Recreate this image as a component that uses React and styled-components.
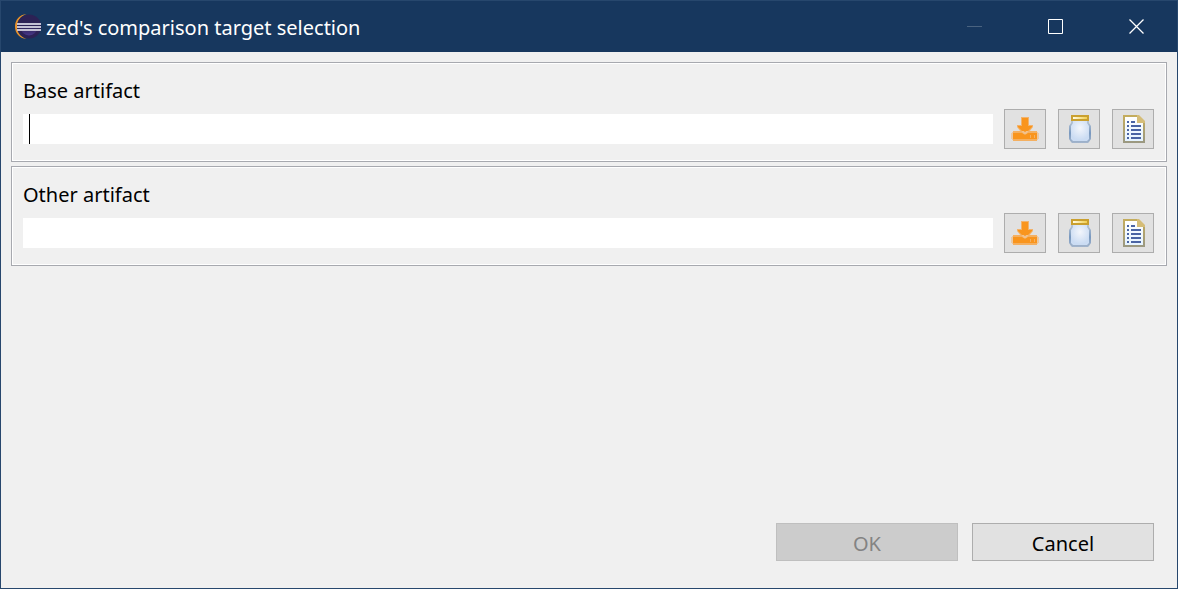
import React, { useId } from "react";
import styled, { createGlobalStyle } from "styled-components";

const GlobalStyle = createGlobalStyle`
  *, *::before, *::after { box-sizing: border-box; }
  body { margin: 0; background: #f0f0f0; }
  body, button, input { font-family: "Noto Sans", "Open Sans", sans-serif; font-size: 20px; }
`;

const Dialog = styled.div`
  min-height: 100vh;
  display: flex;
  flex-direction: column;
  background: #f0f0f0;
  border: 1px solid #27476d;
  color: #000;
`;

const TitleBar = styled.header`
  display: flex;
  align-items: center;
  height: 51px;
  padding-left: 13px;
  background: #17375e;
  color: #fff;
`;

const Title = styled.h1`
  flex: 1;
  margin: 0 0 0 4px;
  padding-top: 2px;
  font-size: 20px;
  font-weight: 400;
  line-height: 28px;
  white-space: nowrap;
`;

const WindowButton = styled.button`
  display: flex;
  align-items: center;
  justify-content: center;
  width: 81px;
  height: 51px;
  padding: 0;
  border: 0;
  background: transparent;
  color: ${(p) => (p.disabled ? "#4a6380" : "#fff")};
`;

const Content = styled.main`
  display: flex;
  flex: 1;
  flex-direction: column;
  gap: 4px;
  padding: 10px;
`;

const Group = styled.section`
  height: 100px;
  padding: 12px 12px 11px 11px;
  border: 1px solid #a7a9af;
  box-shadow: inset 0 0 0 1px #fff;
`;

const GroupLabel = styled.label`
  display: block;
  line-height: 32px;
  height: 34px;
`;

const FieldRow = styled.div`
  display: flex;
  align-items: center;
  gap: 12px;
`;

const TextField = styled.div`
  position: relative;
  flex: 1;
  display: flex;
  margin-right: -1px;

  &::after {
    content: "";
    display: ${(p) => (p.$caret ? "block" : "none")};
    position: absolute;
    left: 6px;
    top: 0;
    width: 1px;
    height: 100%;
    background: #000;
  }
`;

const TextInput = styled.input`
  flex: 1;
  min-width: 0;
  height: 30px;
  padding: 0 6px;
  border: 0;
  outline: 0;
  background: #fff;
`;

const IconButton = styled.button`
  display: flex;
  align-items: center;
  justify-content: center;
  width: 42px;
  height: 40px;
  padding: 0;
  border: 1px solid #adadad;
  background: #e1e1e1;
`;

const Footer = styled.footer`
  display: flex;
  justify-content: flex-end;
  gap: 14px;
  padding: 0 23px 27px;
`;

const ActionButton = styled.button`
  width: 182px;
  height: 38px;
  padding: 4px 0 0;
  border: 1px solid ${(p) => (p.disabled ? "#bfbfbf" : "#adadad")};
  background: ${(p) => (p.disabled ? "#cccccc" : "#e1e1e1")};
  color: ${(p) => (p.disabled ? "#838383" : "#000")};
  line-height: 28px;
`;

function EclipseLogo() {
  return (
    <svg width="28" height="26" viewBox="0 0 28 26" aria-hidden="true">
      <defs>
        <linearGradient id="planet" x1="0" y1="0" x2="0" y2="1">
          <stop offset="0" stopColor="#2c2255" />
          <stop offset="0.5" stopColor="#2c2255" />
          <stop offset="1" stopColor="#473788" />
        </linearGradient>
      </defs>
      <path d="M12.500 0C5.500 0.500 1 6 1 12.500s4.500 12 11.500 12.500C6 22.500 3 18 3 12.500S6 2.500 12.500 0Z" fill="#e8912b" />
      <circle cx="15.200" cy="12.500" r="12" fill="#2c2255" />
      <circle cx="15" cy="13" r="8.500" fill="url(#planet)" />
      <path d="M3 9h24v2H3zM3 12h24v2H3zM3 15h24v2H3z" fill="#c3c1d4" />
    </svg>
  );
}

function DownloadIcon() {
  return (
    <svg width="28" height="28" viewBox="0 0 28 28" aria-hidden="true">
      <path d="M0 18h1v-1h26v1h1v6h-1v1H1v-1H0z" fill="#ecc9a3" />
      <path d="M2 16h24v10H2z" fill="#f4b061" />
      <path d="M2 18h9l3 2 3-2h9v6H2z" fill="#f9951d" />
      <path d="M10 2h8v8h4v2l-4 5h-8l-4-5v-2h4z" fill="#f2b36c" />
      <path d="M11 3h6v8h4v1l-4 4h-2l-1 1-1-1h-2l-4-4v-1h4z" fill="#f9951d" />
      <path d="M11 16h2v1h2v-1h2v1l-2 2h-2l-2-2z" fill="#f1c18c" />
      <path d="M19 20h1v3h-1zM23 20h1v3h-1z" fill="#f5b062" />
    </svg>
  );
}

function JarIcon() {
  return (
    <svg width="28" height="28" viewBox="0 0 28 28" aria-hidden="true">
      <defs>
        <radialGradient id="glass" cx="0.5" cy="0.35" r="0.6">
          <stop offset="0" stopColor="#f3f6fc" />
          <stop offset="1" stopColor="#cbdcf3" />
        </radialGradient>
        <linearGradient id="rim" x1="0" y1="0" x2="0" y2="1">
          <stop offset="0" stopColor="#b9c6d4" />
          <stop offset="0.55" stopColor="#7898bf" />
          <stop offset="1" stopColor="#a4b5cc" />
        </linearGradient>
        <linearGradient id="lid-shine" x1="0" y1="0" x2="1" y2="0">
          <stop offset="0" stopColor="#fffce6" />
          <stop offset="1" stopColor="#f3cf4f" />
        </linearGradient>
      </defs>
      <path d="M6 6h18v2l2 3v13l-2 3-1 1H7l-1-1-2-3V11l2-3z" fill="url(#rim)" />
      <path d="M8 6h14v2l2 3v13l-2 2H8l-2-2V11l2-3z" fill="url(#glass)" />
      <path d="M6 0h18v6H6z" fill="#caa02f" />
      <path d="M8 2h14v2H8z" fill="url(#lid-shine)" />
    </svg>
  );
}

function DocumentIcon() {
  return (
    <svg width="28" height="28" viewBox="0 0 28 28" aria-hidden="true">
      <defs>
        <linearGradient id="page-edge" x1="0" y1="0" x2="0" y2="1">
          <stop offset="0" stopColor="#c5ad5c" />
          <stop offset="1" stopColor="#9a9882" />
        </linearGradient>
        <linearGradient id="paper" x1="0" y1="0" x2="0" y2="1">
          <stop offset="0" stopColor="#fff" />
          <stop offset="1" stopColor="#e5f3ff" />
        </linearGradient>
      </defs>
      <path d="M4 0h14v2h2v2h2v2h2v2h2v20H4z" fill="url(#page-edge)" />
      <path d="M6 2h12v6h6v18H6z" fill="url(#paper)" />
      <path d="M18 0h2l6 6v2h-8z" fill="#d5bd78" />
      <path d="M8 6h2v2H8zM12 6h4v2h-4zM8 10h2v2H8zM12 10h10v2H12zM8 14h2v2H8zM12 14h10v2H12zM8 18h2v2H8zM12 18h10v2H12zM8 22h2v2H8zM12 22h10v2H12z" fill="#4a64a3" />
    </svg>
  );
}

function ArtifactGroup({ label, caret }) {
  const id = useId();
  return (
    <Group>
      <GroupLabel htmlFor={id}>{label}</GroupLabel>
      <FieldRow>
        <TextField $caret={caret}>
          <TextInput id={id} type="text" />
        </TextField>
        <IconButton type="button" aria-label="Download"><DownloadIcon /></IconButton>
        <IconButton type="button" aria-label="Choose archive"><JarIcon /></IconButton>
        <IconButton type="button" aria-label="Choose file"><DocumentIcon /></IconButton>
      </FieldRow>
    </Group>
  );
}

export default function App() {
  return (
    <>
      <GlobalStyle />
      <Dialog>
        <TitleBar>
          <EclipseLogo />
          <Title>zed's comparison target selection</Title>
          <WindowButton type="button" aria-label="Minimize" disabled>
            <svg width="15" height="15" viewBox="0 0 15 15"><path d="M0 7h15v1H0z" fill="currentColor" /></svg>
          </WindowButton>
          <WindowButton type="button" aria-label="Maximize">
            <svg width="15" height="15" viewBox="0 0 15 15"><path d="M.5.5h14v14H.5z" fill="none" stroke="currentColor" /></svg>
          </WindowButton>
          <WindowButton type="button" aria-label="Close">
            <svg width="15" height="15" viewBox="0 0 15 15"><path d="M.5.5l14 14M14.500.5l-14 14" fill="none" stroke="currentColor" strokeWidth="1.300" /></svg>
          </WindowButton>
        </TitleBar>
        <Content>
          <ArtifactGroup label="Base artifact" caret />
          <ArtifactGroup label="Other artifact" />
        </Content>
        <Footer>
          <ActionButton type="button" disabled>OK</ActionButton>
          <ActionButton type="button">Cancel</ActionButton>
        </Footer>
      </Dialog>
    </>
  );
}
